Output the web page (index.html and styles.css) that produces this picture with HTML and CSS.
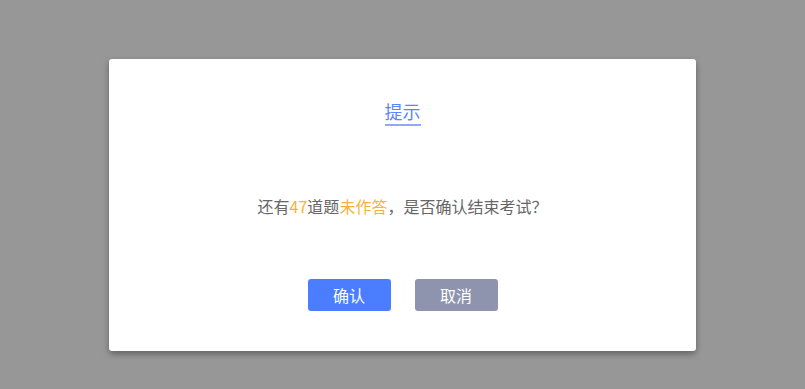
FILE: index.html
```html
<!DOCTYPE html>
<html lang="zh-CN">
<head>
<meta charset="utf-8">
<link rel="stylesheet" href="styles.css">
</head>
<body>
<div class="dialog">
  <div class="title-row"><span class="title">提示</span></div>
  <p class="message">还有<span class="hl">47</span>道题<span class="hl">未作答</span>，是否确认结束考试？</p>
  <div class="actions">
    <button class="btn btn-primary">确认</button>
    <button class="btn btn-cancel">取消</button>
  </div>
</div>
</body>
</html>
```
FILE: styles.css
```css
html, body {
  margin: 0;
  padding: 0;
  height: 100%;
}
body {
  background: #979797;
  font-family: "Microsoft YaHei", "Noto Sans CJK SC", sans-serif;
  overflow: hidden;
}
.dialog {
  width: 587px;
  height: 292px;
  margin: 59px 0 0 109px;
  background: #fff;
  border-radius: 3px;
  box-shadow: 0 3px 6px rgba(0, 0, 0, 0.35);
  box-sizing: border-box;
  padding-top: 40px;
  display: flex;
  flex-direction: column;
  align-items: center;
}
.title-row {
  display: flex;
  justify-content: center;
}
.title {
  font-size: 18px;
  line-height: 24px;
  color: #5b86f5;
  padding-bottom: 1px;
  border-bottom: 2px solid #8fa9f7;
}
.message {
  margin: 69px 0 0;
  font-family: "Noto Sans CJK TC", "Noto Sans CJK SC", sans-serif;
  font-size: 16px;
  line-height: 22px;
  color: #666;
  text-spacing-trim: space-all;
}
.hl {
  color: #f7b23b;
}
.actions {
  margin-top: 62px;
  display: flex;
  gap: 24px;
}
.btn {
  width: 83px;
  height: 32px;
  border: none;
  border-radius: 3px;
  color: #fff;
  font-family: inherit;
  font-size: 16px;
  padding: 0;
}
.btn-primary {
  background: #4a7dff;
}
.btn-cancel {
  background: #8e94ad;
}
```
